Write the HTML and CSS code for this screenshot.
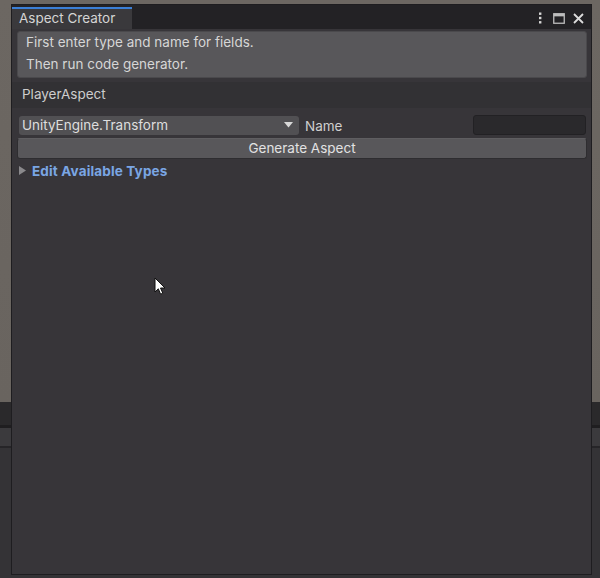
FILE: index.html
```html
<!DOCTYPE html>
<html>
<head>
<meta charset="utf-8">
<link rel="stylesheet" href="styles.css">
</head>
<body>
<div class="desktop">
  <div class="window">
    <div class="titlebar">
      <div class="tab">Aspect Creator</div>
      <div class="win-icons">
        <svg class="ic-kebab" width="4" height="12" viewBox="0 0 4 12"><rect x="1" y="0.5" width="2.4" height="2.4" fill="#d6d6d6"/><rect x="1" y="4.8" width="2.4" height="2.4" fill="#d6d6d6"/><rect x="1" y="9.1" width="2.4" height="2.4" fill="#d6d6d6"/></svg>
        <svg class="ic-max" width="12" height="11" viewBox="0 0 12 11"><rect x="0.75" y="0.75" width="10.5" height="9.5" fill="none" stroke="#bdbdbd" stroke-width="1.3"/><rect x="0.75" y="0.75" width="10.5" height="2.6" fill="#bdbdbd"/></svg>
        <svg class="ic-close" width="11" height="11" viewBox="0 0 11 11"><path d="M1 1L10 10M10 1L1 10" stroke="#dcdcdc" stroke-width="1.8"/></svg>
      </div>
    </div>
    <div class="content">
      <div class="helpbox">
        <p>First enter type and name for fields.</p>
        <p>Then run code generator.</p>
      </div>
      <div class="aspect-name">PlayerAspect</div>
      <div class="field-row">
        <div class="dropdown">
          <span>UnityEngine.Transform</span>
          <svg width="9" height="6" viewBox="0 0 9 6"><path d="M0 0H9L4.5 5.5Z" fill="#d8d8d8"/></svg>
        </div>
        <div class="label">Name</div>
        <div class="textfield"></div>
      </div>
      <div class="button">Generate Aspect</div>
      <div class="foldout">
        <svg width="7" height="9" viewBox="0 0 7 9"><path d="M0 0L7 4.5L0 9Z" fill="#8a898c"/></svg>
        <span>Edit Available Types</span>
      </div>
    </div>
  </div>
  <svg class="cursor" width="13" height="19" viewBox="0 0 13 19"><path d="M1 1V15L4.3 11.8L6.6 17.2L8.8 16.2L6.5 11H11Z" fill="#ffffff" stroke="#111" stroke-width="1"/></svg>
</div>
</body>
</html>
```
FILE: styles.css
```css
* { box-sizing: border-box; }
html, body { margin: 0; padding: 0; }
body {
  width: 600px;
  height: 578px;
  overflow: hidden;
  font-family: Inter, "Noto Sans", "Liberation Sans", sans-serif;
  font-size: 13.5px;
}
.desktop {
  position: relative;
  width: 600px;
  height: 578px;
  background: linear-gradient(to bottom,
    #6c6762 0px, #69645f 402px,
    #2a292b 402px, #2a292b 425px,
    #1f1e20 425px, #1f1e20 428px,
    #3b3a3d 428px, #3b3a3d 446px,
    #262528 446px, #262528 448px,
    #343336 448px, #343336 578px);
}
.window {
  position: absolute;
  left: 11px;
  top: 4px;
  width: 581px;
  height: 571px;
  background: #373539;
  border: 1px solid #1e1d20;
  display: flex;
  flex-direction: column;
}
.titlebar {
  height: 24px;
  background: #232225;
  display: flex;
  align-items: flex-end;
  justify-content: space-between;
  flex-shrink: 0;
}
.tab {
  width: 120px;
  height: 22px;
  background: #3a393c;
  border-top: 2px solid #3b7fd6;
  color: #d4d4d4;
  padding-left: 7px;
  line-height: 19px;
  font-size: 13.5px;
}
.win-icons {
  display: flex;
  align-items: center;
  gap: 8px;
  padding-right: 7px;
  height: 24px;
  padding-top: 2px;
}
.ic-kebab { margin-right: 3px; }
.content {
  flex: 1;
  display: flex;
  flex-direction: column;
  padding-top: 2px;
}
.helpbox {
  margin: 0 4px 0 5px;
  height: 47px;
  background: #58575a;
  border: 1px solid #4a494c;
  border-radius: 3px;
  padding: 0 0 0 8px;
  color: #d6d6d6;
}
.helpbox p {
  margin: 0;
  height: 22px;
  line-height: 20px;
}
.aspect-name {
  margin-top: 4px;
  height: 26px;
  background: #323134;
  color: #cdcdcd;
  padding-left: 10px;
  line-height: 25px;
}
.field-row {
  margin-top: 7px;
  display: flex;
  align-items: center;
  height: 20px;
  padding: 0 5px 0 7px;
}
.dropdown {
  width: 280px;
  height: 19px;
  background: #515053;
  border-radius: 3px;
  display: flex;
  align-items: center;
  justify-content: space-between;
  padding: 0 6px 0 3px;
  color: #dedede;
}
.label {
  margin-left: 6px;
  color: #cfcfcf;
  flex: 1;
  padding-top: 1px;
}
.textfield {
  width: 113px;
  height: 20px;
  background: #2a292c;
  border: 1px solid #222124;
  border-radius: 3px;
}
.button {
  margin: 3px 4px 0 5px;
  height: 21px;
  background: #58575a;
  border: 1px solid #2e2d30;
  border-top-color: #5f5e61;
  border-radius: 3px;
  color: #e2e2e2;
  text-align: center;
  line-height: 18px;
}
.foldout {
  margin-top: 3px;
  display: flex;
  align-items: center;
  gap: 6px;
  padding-left: 7px;
  height: 17px;
}
.foldout span {
  color: #7aa6e4;
  font-weight: 700;
  font-size: 13.5px;
  letter-spacing: 0.15px;
}
.cursor {
  position: absolute;
  left: 154px;
  top: 277px;
}
```
